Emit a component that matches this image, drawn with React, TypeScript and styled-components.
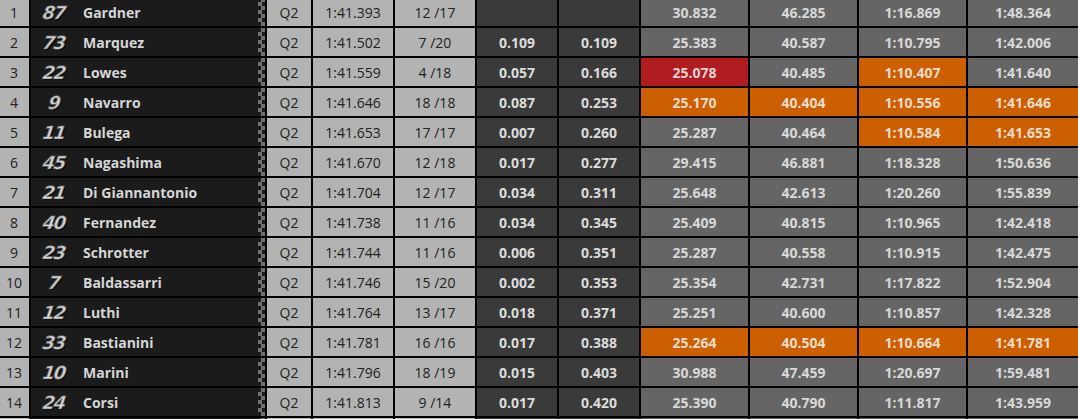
import React from "react";
import styled, { createGlobalStyle, css } from "styled-components";

const GlobalStyle = createGlobalStyle`
  html, body {
    margin: 0;
    padding: 0;
    background: #000;
    overflow: hidden;
    height: 419px;
  }
  body {
    font-family: "Open Sans", "Noto Sans", sans-serif;
  }
`;

type Hl = "red" | "orange" | undefined;

interface RowData {
  pos: string;
  num: string;
  name: string;
  session: string;
  time: string;
  laps: string;
  gap1: string;
  gap2: string;
  sectors: [string, Hl][];
}

const rows: RowData[] = [
  { pos: "1", num: "87", name: "Gardner", session: "Q2", time: "1:41.393", laps: "12 /17", gap1: "", gap2: "", sectors: [["30.832", undefined], ["46.285", undefined], ["1:16.869", undefined], ["1:48.364", undefined]] },
  { pos: "2", num: "73", name: "Marquez", session: "Q2", time: "1:41.502", laps: "7 /20", gap1: "0.109", gap2: "0.109", sectors: [["25.383", undefined], ["40.587", undefined], ["1:10.795", undefined], ["1:42.006", undefined]] },
  { pos: "3", num: "22", name: "Lowes", session: "Q2", time: "1:41.559", laps: "4 /18", gap1: "0.057", gap2: "0.166", sectors: [["25.078", "red"], ["40.485", undefined], ["1:10.407", "orange"], ["1:41.640", undefined]] },
  { pos: "4", num: "9", name: "Navarro", session: "Q2", time: "1:41.646", laps: "18 /18", gap1: "0.087", gap2: "0.253", sectors: [["25.170", "orange"], ["40.404", "orange"], ["1:10.556", "orange"], ["1:41.646", "orange"]] },
  { pos: "5", num: "11", name: "Bulega", session: "Q2", time: "1:41.653", laps: "17 /17", gap1: "0.007", gap2: "0.260", sectors: [["25.287", undefined], ["40.464", undefined], ["1:10.584", "orange"], ["1:41.653", "orange"]] },
  { pos: "6", num: "45", name: "Nagashima", session: "Q2", time: "1:41.670", laps: "12 /18", gap1: "0.017", gap2: "0.277", sectors: [["29.415", undefined], ["46.881", undefined], ["1:18.328", undefined], ["1:50.636", undefined]] },
  { pos: "7", num: "21", name: "Di Giannantonio", session: "Q2", time: "1:41.704", laps: "12 /17", gap1: "0.034", gap2: "0.311", sectors: [["25.648", undefined], ["42.613", undefined], ["1:20.260", undefined], ["1:55.839", undefined]] },
  { pos: "8", num: "40", name: "Fernandez", session: "Q2", time: "1:41.738", laps: "11 /16", gap1: "0.034", gap2: "0.345", sectors: [["25.409", undefined], ["40.815", undefined], ["1:10.965", undefined], ["1:42.418", undefined]] },
  { pos: "9", num: "23", name: "Schrotter", session: "Q2", time: "1:41.744", laps: "11 /16", gap1: "0.006", gap2: "0.351", sectors: [["25.287", undefined], ["40.558", undefined], ["1:10.915", undefined], ["1:42.475", undefined]] },
  { pos: "10", num: "7", name: "Baldassarri", session: "Q2", time: "1:41.746", laps: "15 /20", gap1: "0.002", gap2: "0.353", sectors: [["25.354", undefined], ["42.731", undefined], ["1:17.822", undefined], ["1:52.904", undefined]] },
  { pos: "11", num: "12", name: "Luthi", session: "Q2", time: "1:41.764", laps: "13 /17", gap1: "0.018", gap2: "0.371", sectors: [["25.251", undefined], ["40.600", undefined], ["1:10.857", undefined], ["1:42.328", undefined]] },
  { pos: "12", num: "33", name: "Bastianini", session: "Q2", time: "1:41.781", laps: "16 /16", gap1: "0.017", gap2: "0.388", sectors: [["25.264", "orange"], ["40.504", "orange"], ["1:10.664", "orange"], ["1:41.781", "orange"]] },
  { pos: "13", num: "10", name: "Marini", session: "Q2", time: "1:41.796", laps: "18 /19", gap1: "0.015", gap2: "0.403", sectors: [["30.988", undefined], ["47.459", undefined], ["1:20.697", undefined], ["1:59.481", undefined]] },
  { pos: "14", num: "24", name: "Corsi", session: "Q2", time: "1:41.813", laps: "9 /14", gap1: "0.017", gap2: "0.420", sectors: [["25.390", undefined], ["40.790", undefined], ["1:11.817", undefined], ["1:43.959", undefined]] },
  { pos: "", num: "", name: "", session: "", time: "", laps: "", gap1: "", gap2: "", sectors: [["", undefined], ["", undefined], ["", undefined], ["", undefined]] },
];

const Table = styled.div`
  display: flex;
  flex-direction: column;
  gap: 2px;
  margin-top: -2px;
  width: 1078px;
`;

const Row = styled.div`
  display: grid;
  grid-template-columns: 29px 234px 44px 80px 80px 80px 80px 107px 107px 107px 1fr;
  column-gap: 2px;
  height: 28px;
`;

const Cell = styled.div`
  display: flex;
  align-items: center;
  justify-content: center;
  font-size: 14px;
  white-space: nowrap;
  overflow: hidden;
`;

const LightCell = styled(Cell)`
  background: #b3b3b3;
  color: #222;
  font-weight: 400;
`;

const PosCell = styled(LightCell)`
  padding-right: 1px;
`;

const RiderCell = styled(Cell)`
  background: #1b1b1b;
  justify-content: flex-start;
`;

const RiderNumber = styled.span`
  width: 46px;
  flex: none;
  text-align: center;
  font-family: "DejaVu Sans", "Lato", sans-serif;
  font-weight: 900;
  font-style: italic;
  font-size: 18px;
  letter-spacing: -1.5px;
  color: #d2d2d2;
  -webkit-text-stroke: 0.7px #555;
  text-shadow: 1px 1px 0 #000;
  transform: skewX(-8deg);
`;

const RiderName = styled.span`
  margin-left: 6px;
  font-weight: 700;
  color: #d6d6d6;
`;

const Checker = styled.span`
  margin-left: auto;
  width: 7px;
  height: 100%;
  flex: none;
  background-image: conic-gradient(
    #707070 25%,
    #1b1b1b 0 50%,
    #707070 0 75%,
    #1b1b1b 0
  );
  background-size: 7px 8px;
`;

const GapCell = styled(Cell)`
  background: #3a3a3a;
  color: #dcdcdc;
  font-weight: 700;
`;

const SectorCell = styled(Cell)<{ $hl?: Hl }>`
  background: #656565;
  color: #d8d8d8;
  font-weight: 700;
  ${(p) =>
    p.$hl === "red" &&
    css`
      background: #b01c20;
      color: #e2d2d2;
    `}
  ${(p) =>
    p.$hl === "orange" &&
    css`
      background: #cc5f00;
      color: #eadacb;
    `}
`;

export default function App() {
  return (
    <>
      <GlobalStyle />
      <Table>
        {rows.map((r, idx) => (
          <Row key={idx}>
            <PosCell>{r.pos}</PosCell>
            <RiderCell>
              <RiderNumber>{r.num}</RiderNumber>
              <RiderName>{r.name}</RiderName>
              <Checker />
            </RiderCell>
            <LightCell>{r.session}</LightCell>
            <LightCell>{r.time}</LightCell>
            <LightCell>{r.laps}</LightCell>
            <GapCell>{r.gap1}</GapCell>
            <GapCell>{r.gap2}</GapCell>
            {r.sectors.map(([v, hl], i) => (
              <SectorCell key={i} $hl={hl}>
                {v}
              </SectorCell>
            ))}
          </Row>
        ))}
      </Table>
    </>
  );
}
